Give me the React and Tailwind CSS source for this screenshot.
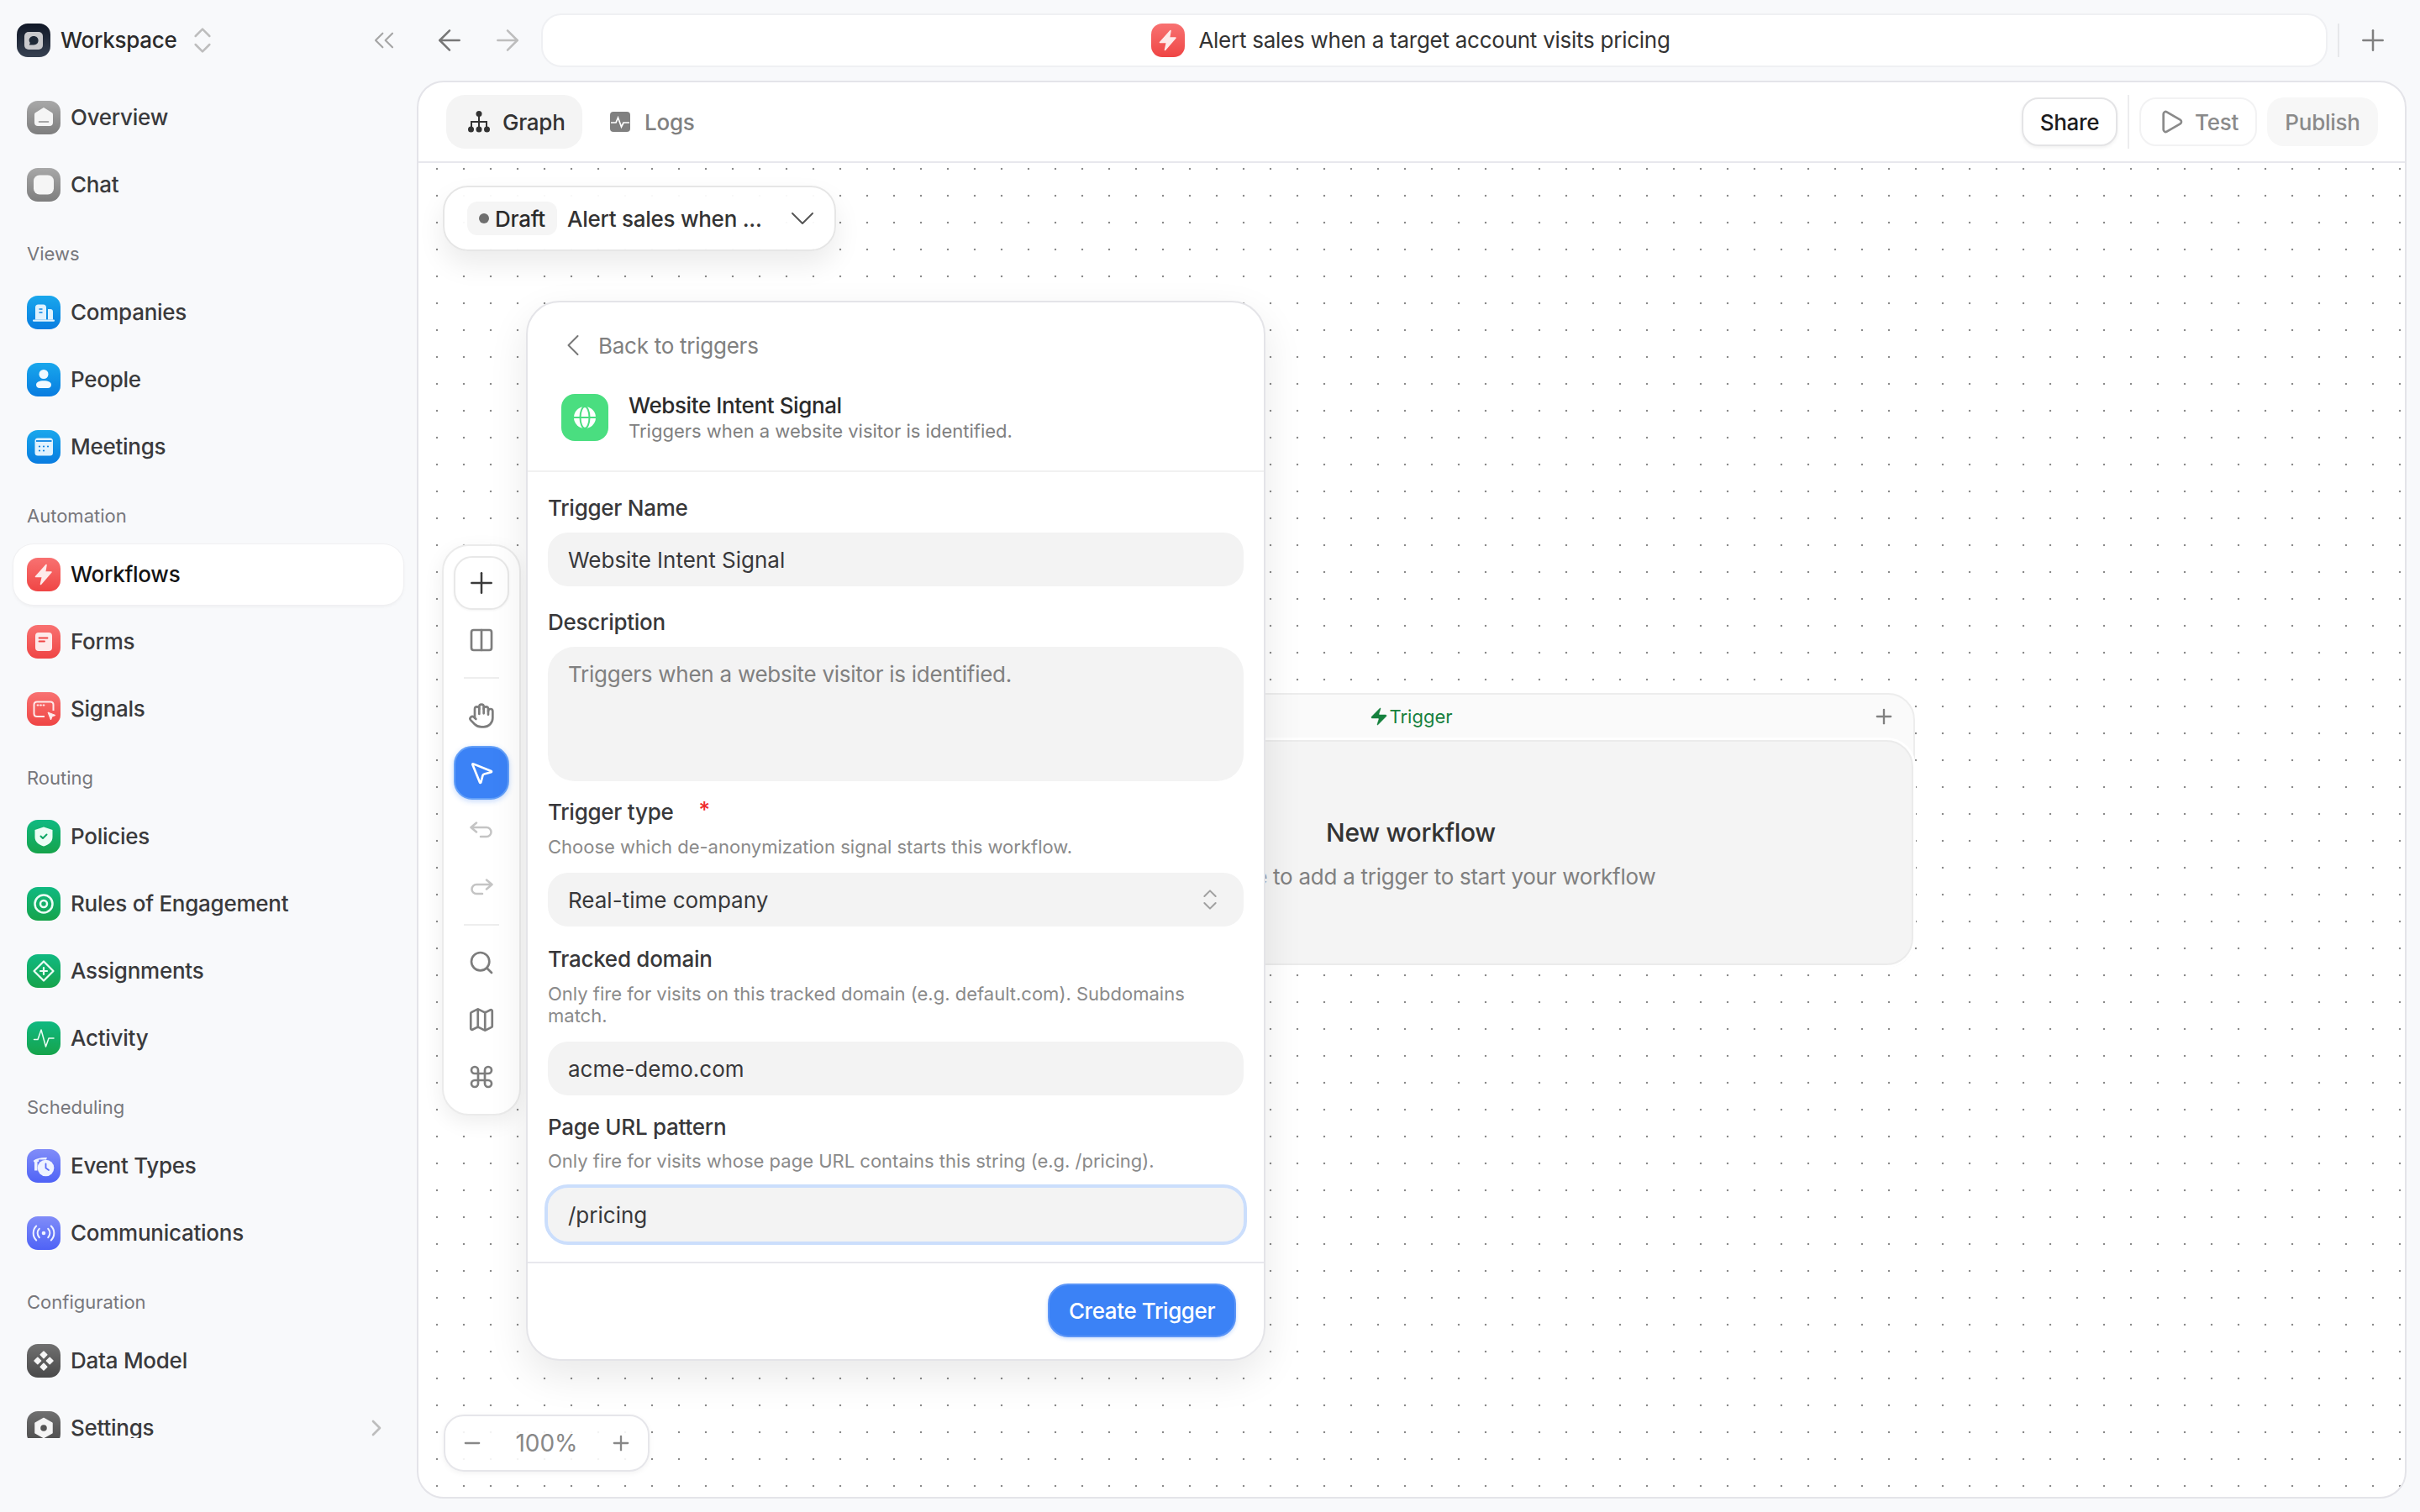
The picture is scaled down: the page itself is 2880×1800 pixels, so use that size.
import React from 'react';
import {
  ArrowLeft, ArrowRight, ChevronDown, ChevronLeft, ChevronRight, ChevronsLeft, ChevronsUpDown,
  Columns2, Command, Hand, Map as MapIcon, Minus, MousePointer2, Play, Plus, Search, Zap,
} from 'lucide-react';

const GRAY = 'from-[#a8a8a8] to-[#7e7e7e]';
const BLUE = 'from-[#1aa7ec] to-[#0a7ce0]';
const RED = 'from-[#f87171] to-[#ef4444]';
const GREEN = 'from-[#10b981] to-[#16a34a]';
const INDIGO = 'from-[#818cf8] to-[#4f62f6]';
const DARK = 'from-[#707070] to-[#4a4a4a]';

// All tile glyphs are drawn on a 40x40 box
const glyphs = {
  workspace: (
    <>
      <rect x="9" y="10" width="22" height="21" rx="5" fill="#c9c9cc" />
      <path d="M20 15c3.400 0 5.600 2.200 5.600 5.200 0 3-2.200 5.200-5.400 5.200h-5.400l1-2.400c-.8-.8-1.200-1.800-1.200-2.900 0-2.900 2.400-5.100 5.400-5.100z" fill="#1f2937" />
    </>
  ),
  home: (
    <>
      <path d="M20 8l10 6.200c.7.5 1 1.200 1 2V26c0 2.400-1.600 4-4 4H13c-2.400 0-4-1.600-4-4v-9.800c0-.8.3-1.500 1-2z" fill="#f5f5f5" />
      <path d="M14.500 25h11" stroke="#8c8c8c" strokeWidth="1.600" strokeLinecap="round" />
    </>
  ),
  chat: <rect x="8" y="8.500" width="24" height="23" rx="7" fill="#f5f5f5" />,
  building: (
    <>
      <path d="M10 28.500V14c0-2 1.200-3.500 3.500-3.500h6c2.200 0 3.500 1.500 3.500 3.500v14.500z" fill="#e0f2fe" />
      <path d="M25 28.500V16h3c1.800 0 3 1.200 3 3v9.500z" fill="#e0f2fe" />
      <rect x="7" y="28.500" width="26" height="2.200" rx="1" fill="#e0f2fe" />
      <path d="M14.500 16h4M14.500 20h4" stroke="#0a84e4" strokeWidth="1.600" />
    </>
  ),
  person: (
    <>
      <circle cx="20" cy="13.500" r="5.500" fill="#f0f9ff" />
      <path d="M11 26c0-3 3.500-4.800 9-4.800s9 1.800 9 4.800c0 2.500-1.800 4-4 4H15c-2.200 0-4-1.500-4-4z" fill="#f0f9ff" />
    </>
  ),
  calendar: (
    <>
      <rect x="9.500" y="9.500" width="21.500" height="21" rx="3.500" fill="#e0f2fe" />
      <path d="M11 13h18.500" stroke="#0a84e4" strokeWidth="1.800" />
      <g fill="#0a84e4">
        <circle cx="15" cy="19.500" r="1.100" /><circle cx="20" cy="19.500" r="1.100" /><circle cx="25" cy="19.500" r="1.100" />
        <circle cx="15" cy="24.500" r="1.100" /><circle cx="20" cy="24.500" r="1.100" />
      </g>
    </>
  ),
  bolt: <path d="M23 8.500L10.500 22.500h8L16.500 31.500 29 17h-7.500z" fill="#feeaea" stroke="#feeaea" strokeWidth="1.600" strokeLinejoin="round" />,
  form: (
    <>
      <rect x="10" y="9" width="20" height="22" rx="4" fill="#feeaea" />
      <path d="M14.500 15.500h10M14.500 19.500h6.500" stroke="#ef4444" strokeWidth="1.800" strokeLinecap="round" />
    </>
  ),
  signal: (
    <>
      <path d="M21 29H12c-2 0-3.500-1.400-3.500-3.500V15c0-2.100 1.500-3.500 3.500-3.500h16c2.100 0 3.500 1.400 3.500 3.500v7" fill="none" stroke="#feeaea" strokeWidth="2" />
      <path d="M12.500 15.500h1M16 15.500h1M19.500 15.500h1" stroke="#feeaea" strokeWidth="1.800" strokeLinecap="round" />
      <path d="M25 24l9 3.500-4 1.500-1.500 4z" fill="#feeaea" stroke="#feeaea" strokeWidth="1" strokeLinejoin="round" />
    </>
  ),
  shield: (
    <>
      <path d="M20 8.500l10.500 3.500v8.500c0 5.800-4.500 9-10.500 11-6-2-10.500-5.200-10.500-11V12z" fill="#ecfdf5" />
      <path d="M16.500 19.500l2.500 2.500 4.500-4.500" fill="none" stroke="#10a866" strokeWidth="2" strokeLinecap="round" strokeLinejoin="round" />
    </>
  ),
  target: (
    <>
      <circle cx="20" cy="20" r="10.500" fill="none" stroke="#ecfdf5" strokeWidth="2.500" />
      <circle cx="20" cy="20" r="4" fill="none" stroke="#ecfdf5" strokeWidth="2.500" />
    </>
  ),
  diamond: (
    <>
      <path d="M20 8.500L31.500 20 20 31.500 8.500 20z" fill="none" stroke="#ecfdf5" strokeWidth="2.200" strokeLinejoin="round" />
      <path d="M20 16v8M16 20h8" stroke="#ecfdf5" strokeWidth="2.200" strokeLinecap="round" />
    </>
  ),
  pulse: <path d="M8.500 21.500h4.500L17 10l5.500 20 3.500-10h6" fill="none" stroke="#ecfdf5" strokeWidth="1.500" strokeLinecap="round" strokeLinejoin="round" />,
  eventType: (
    <>
      <path d="M8 13.500c3-2 8-3.500 14-3.500h2l-1 2.500H14V15h-1.500v10.500H9V15.500L8 15z" fill="#eef2ff" />
      <circle cx="22.500" cy="22.500" r="9.800" fill="#eef2ff" />
      <path d="M22.500 17.500v5l3.500 2.500" fill="none" stroke="#5b6cf7" strokeWidth="1.800" strokeLinecap="round" strokeLinejoin="round" />
    </>
  ),
  radio: (
    <>
      <circle cx="20" cy="20" r="2.300" fill="#eef2ff" />
      <path d="M14.800 14.800a7.400 7.400 0 0 0 0 10.400M25.200 14.800a7.400 7.400 0 0 1 0 10.400M11.200 11.500a12 12 0 0 0 0 17M28.800 11.500a12 12 0 0 1 0 17" fill="none" stroke="#eef2ff" strokeWidth="2" strokeLinecap="round" />
    </>
  ),
  model: (
    <g fill="#f5f5f5" stroke="#f5f5f5" strokeWidth="1.500" strokeLinejoin="round">
      <path d="M20 9l3.800 3.800L20 16.600l-3.800-3.800z" />
      <path d="M12.800 16.200l3.800 3.800-3.800 3.800L9 20z" />
      <path d="M27.200 16.200L31 20l-3.800 3.800-3.800-3.800z" />
      <path d="M20 23.400l3.800 3.800L20 31l-3.800-3.800z" />
    </g>
  ),
  gear: (
    <>
      <path d="M20 8.500l10 5.700v11.600l-10 5.700-10-5.700V14.200z" fill="#f5f5f5" stroke="#f5f5f5" strokeWidth="1.500" strokeLinejoin="round" />
      <circle cx="20" cy="20" r="3.800" fill="#555" />
    </>
  ),
};

function Tile({ tone, glyph, className = 'w-10 h-10' }) {
  return (
    <span className={`${className} shrink-0 rounded-[13px] bg-linear-to-b ${tone} flex items-center justify-center`}>
      <svg viewBox="0 0 40 40" width="40" height="40" className="shrink-0">{glyphs[glyph]}</svg>
    </span>
  );
}

const sections = [
  { items: [['Overview', GRAY, 'home'], ['Chat', GRAY, 'chat']] },
  { label: 'Views', items: [['Companies', BLUE, 'building'], ['People', BLUE, 'person'], ['Meetings', BLUE, 'calendar']] },
  { label: 'Automation', items: [['Workflows', RED, 'bolt'], ['Forms', RED, 'form'], ['Signals', RED, 'signal']] },
  { label: 'Routing', items: [['Policies', GREEN, 'shield'], ['Rules of Engagement', GREEN, 'target'], ['Assignments', GREEN, 'diamond'], ['Activity', GREEN, 'pulse']] },
  { label: 'Scheduling', items: [['Event Types', INDIGO, 'eventType'], ['Communications', INDIGO, 'radio']] },
  { label: 'Configuration', items: [['Data Model', DARK, 'model'], ['Settings', DARK, 'gear']] },
];

function Sidebar() {
  return (
    <aside className="w-[496px] shrink-0 flex flex-col">
      <div className="h-[96px] shrink-0 flex items-center pl-5 pr-[10px]">
        <Tile tone="from-[#111827] to-[#374151]" glyph="workspace" />
        <span className="ml-3 -mt-[2px] text-[26px] tracking-[-0.01em] font-medium text-[#2b2b2b]">Workspace</span>
        <ChevronsUpDown size={40} strokeWidth={1.5} className="ml-[10px] text-[#bdbdbd] shrink-0" />
        <ChevronsLeft size={40} strokeWidth={1.3} className="ml-auto mr-[9px] text-[#a6a6a6] shrink-0" />
      </div>
      <nav className="mt-2 px-4 h-[1608px] overflow-hidden">
        {sections.map((section, i) => (
          <section key={i} className={section.label ? 'mt-6' : ''}>
            {section.label && (
              <div className="h-11 mb-3 pl-4 flex items-center text-[22px] text-[#77777c]">{section.label}</div>
            )}
            <div className="flex flex-col gap-2">
              {section.items.map(([name, tone, glyph]) => {
                const active = name === 'Workflows';
                return (
                  <div
                    key={name}
                    className={`h-[72px] rounded-[24px] pl-4 pr-4 flex items-center gap-3 text-[26px] tracking-[-0.01em] ${
                      active
                        ? 'bg-white font-medium text-[#141414] shadow-[0_0_0_1px_#f0f0f2,0_2px_4px_rgba(0,0,0,0.05)]'
                        : 'font-[450] text-[#3a3a3c]'
                    }`}
                  >
                    <Tile tone={tone} glyph={glyph} />
                    <span className="-mt-[2px]">{name}</span>
                    {name === 'Settings' && <ChevronRight size={32} className="ml-auto text-[#bdbdbd]" />}
                  </div>
                );
              })}
            </div>
          </section>
        ))}
      </nav>
    </aside>
  );
}

function TopBar() {
  return (
    <div className="h-[96px] shrink-0 flex items-center">
      <ArrowLeft size={40} strokeWidth={1.5} className="ml-[19px] text-[#777] shrink-0" />
      <ArrowRight size={40} strokeWidth={1.5} className="ml-[29px] text-[#bdbdbd] shrink-0" />
      <div className="ml-[20px] w-[2126px] h-16 bg-white rounded-[24px] border-2 border-[#eff0f3] flex items-center justify-center gap-[16px] pr-[56px]">
        <Tile tone={RED} glyph="bolt" />
        <span className="-mt-[2px] text-[26px] tracking-[-0.01em] text-[#333]">Alert sales when a target account visits pricing</span>
      </div>
      <div className="ml-[12px] w-[2px] h-10 bg-[#e6e7ea]" />
      <Plus size={40} strokeWidth={1.5} className="ml-[20px] text-[#808080] shrink-0" />
    </div>
  );
}

function PanelHeader() {
  return (
    <div className="h-[96px] shrink-0 border-b-2 border-[#e8e8ed] flex items-center pl-[33px] pr-[32px] text-[26px] tracking-[-0.01em] font-[450]">
      <div className="h-16 w-[162px] rounded-[22px] bg-[#f4f4f4] flex items-center pl-[25px] gap-[14px] text-[#333]">
        <svg viewBox="0 0 28 28" width="28" height="28" className="shrink-0">
          <path d="M14 5v9M5 22v-8h18v8M14 14v8" fill="none" stroke="#333" strokeWidth="2" />
          <g fill="#333">
            <circle cx="14" cy="4.500" r="3.500" /><circle cx="4.500" cy="23" r="3.500" /><circle cx="14" cy="23" r="3.500" /><circle cx="23.500" cy="23" r="3.500" />
          </g>
        </svg>
        Graph
      </div>
      <div className="h-16 ml-2 pl-[25px] flex items-center gap-[17px] text-[#808080]">
        <svg viewBox="0 0 24 24" width="24" height="24" className="shrink-0">
          <rect width="24" height="24" rx="4" fill="#808080" />
          <path d="M1 13h6l2.500-6 4 11 2.500-5h7" fill="none" stroke="#fff" strokeWidth="1.700" />
        </svg>
        Logs
      </div>
      <div className="ml-auto flex items-center">
        <div className="h-[58px] w-[114px] rounded-[20px] bg-white border-2 border-[#e4e4e6] shadow-[0_2px_4px_rgba(0,0,0,0.06)] flex items-center justify-center font-medium text-[#1c1c1e]">
          Share
        </div>
        <div className="mx-3 w-[2px] h-16 bg-[#ececee]" />
        <div className="h-[58px] w-[140px] rounded-[20px] bg-white border-2 border-[#f2f2f3] flex items-center pl-5 gap-3 text-[#8a8a8a]">
          <Play size={32} strokeWidth={2} className="shrink-0" />
          Test
        </div>
        <div className="ml-3 h-[58px] w-[132px] rounded-[20px] bg-[#f7f7f7] flex items-center justify-center text-[#8a8a8a]">
          Publish
        </div>
      </div>
    </div>
  );
}

function ToolButton({ children, className = 'text-[#7d7d7d]' }) {
  return <div className={`h-16 w-[66px] rounded-[22px] flex items-center justify-center ${className}`}>{children}</div>;
}

// Flatter than lucide's Undo2, the redo is the same arrow mirrored
function UndoArrow({ className = '' }) {
  return (
    <svg viewBox="0 0 28 20" width="28" height="20" fill="none" stroke="currentColor" strokeWidth="2.500" strokeLinecap="round" strokeLinejoin="round" className={className}>
      <path d="M8 1.500L1.500 7 8 12.500M1.500 7H20a5.500 5.500 0 0 1 0 11h-7" />
    </svg>
  );
}

function Toolbar() {
  return (
    <div className="absolute left-[28px] top-[454px] w-[94px] p-3 rounded-[32px] bg-white border-2 border-[#ebebeb] shadow-[0_8px_24px_rgba(0,0,0,0.07)] flex flex-col gap-1">
      <ToolButton className="border-2 border-[#e8e8e8] bg-white shadow-[0_1px_3px_rgba(0,0,0,0.05)] text-[#3a3a3a]">
        <Plus size={40} strokeWidth={1.5} />
      </ToolButton>
      <ToolButton><Columns2 size={32} strokeWidth={2} /></ToolButton>
      <div className="w-[42px] h-[2px] my-[8px] mx-auto bg-[#eeeeee]" />
      <ToolButton><Hand size={32} strokeWidth={2} /></ToolButton>
      <ToolButton className="bg-[#3b82f6] border-2 border-[#64a0f8] text-white shadow-[0_2px_6px_rgba(59,130,246,0.3)]">
        <MousePointer2 size={32} strokeWidth={2} />
      </ToolButton>
      <ToolButton className="text-[#c4c4c4]"><UndoArrow /></ToolButton>
      <ToolButton className="text-[#c4c4c4]"><UndoArrow className="-scale-x-100" /></ToolButton>
      <div className="w-[42px] h-[2px] my-[8px] mx-auto bg-[#eeeeee]" />
      <ToolButton><Search size={32} strokeWidth={2} /></ToolButton>
      <ToolButton><MapIcon size={34} strokeWidth={1.9} /></ToolButton>
      <ToolButton><Command size={32} strokeWidth={2} /></ToolButton>
    </div>
  );
}

function Label({ children, className = '' }) {
  return <div className={`h-10 flex items-center text-[26px] tracking-[-0.01em] font-[450] text-[#38383a] ${className}`}>{children}</div>;
}

function Help({ children, className = '' }) {
  return <div className={`text-[22px] leading-[26px] text-[#8a8a8a] ${className}`}>{children}</div>;
}

function Field({ children, className = '' }) {
  return (
    <div className={`h-16 rounded-[24px] bg-[#f3f3f3] px-6 flex items-center text-[26px] text-[#38383a] ${className}`}>
      {children}
    </div>
  );
}

function TriggerDialog() {
  return (
    <div className="absolute left-[128px] top-[164px] w-[880px] h-[1262px] rounded-[40px] bg-white border-2 border-[#e4e4e8] shadow-[0_18px_48px_rgba(0,0,0,0.09)] flex flex-col">
      <div className="h-[202px] shrink-0 border-b-2 border-[#f1f1f1] pt-[31px]">
        <div className="h-10 pl-[38px] flex items-center gap-[14px] text-[26px] tracking-[-0.01em] text-[#808080]">
          <ChevronLeft size={44} strokeWidth={1.1} className="shrink-0 -mx-[6px] text-[#777]" />
          Back to triggers
        </div>
        <div className="mt-[37px] pl-10 flex items-center gap-6">
          <span className="w-14 h-14 shrink-0 rounded-[16px] bg-[#4ade80] flex items-center justify-center">
            <svg viewBox="0 0 28 28" width="28" height="28">
              <circle cx="14" cy="14" r="13" fill="#fff" />
              <ellipse cx="14" cy="14" rx="5.500" ry="13" fill="none" stroke="#4ade80" strokeWidth="2" />
              <path d="M1 14h26" stroke="#4ade80" strokeWidth="2" />
            </svg>
          </span>
          <div>
            <div className="text-[26px] tracking-[-0.015em] leading-[30px] font-medium text-[#2b2b2b]">Website Intent Signal</div>
            <Help className="mt-[2px] text-[#808080]">Triggers when a website visitor is identified.</Help>
          </div>
        </div>
      </div>
      <div className="px-6 flex-1">
        <Label className="mt-[22px]">Trigger Name</Label>
        <Field className="mt-[10px]">Website Intent Signal</Field>
        <Label className="mt-[22px]">Description</Label>
        <div className="mt-[10px] h-[160px] rounded-[32px] bg-[#f3f3f3] px-6 pt-[17px] text-[26px] tracking-[-0.01em] leading-[32px] text-[#808080]">
          Triggers when a website visitor is identified.
        </div>
        <Label className="mt-[16px]">
          Trigger type
          <span className="ml-[30px] -mt-[6px] text-[#ef2b2b]">*</span>
        </Label>
        <Help className="mt-[9px]">Choose which de-anonymization signal starts this workflow.</Help>
        <Field className="mt-[18px] justify-between pr-[24px]">
          Real-time company
          <ChevronsUpDown size={32} strokeWidth={1.5} className="text-[#a0a0a0]" />
        </Field>
        <Label className="mt-[18px]">Tracked domain</Label>
        <Help className="mt-[9px]">Only fire for visits on this tracked domain (e.g. default.com). Subdomains match.</Help>
        <Field className="mt-[18px]">acme-demo.com</Field>
        <Label className="mt-[17px]">Page URL pattern</Label>
        <Help className="mt-[8px]">Only fire for visits whose page URL contains this string (e.g. /pricing).</Help>
        <Field className="mt-[19px] outline-4 outline-[#cbdefc]">/pricing</Field>
      </div>
      <div className="h-[116px] shrink-0 border-t-2 border-[#e8e8ed] pt-6 pr-[33px] flex justify-end">
        <div className="h-16 w-[224px] rounded-[24px] bg-[#3b82f6] border-2 border-[#5b95f7] shadow-[0_2px_4px_rgba(59,130,246,0.25)] flex items-center justify-center text-[26px] tracking-[-0.015em] font-[450] text-white">
          Create Trigger
        </div>
      </div>
    </div>
  );
}

function WorkflowNode() {
  return (
    <div className="absolute left-[581px] top-[631px] w-[1200px] rounded-[32px] bg-[#fafafa] border-2 border-[#ededed]">
      <div className="h-[54px] -mt-[1px] relative flex items-center justify-center text-[22px] text-[#15803d]">
        <Zap size={24} fill="currentColor" strokeWidth={0.5} />
        Trigger
        <Plus size={28} strokeWidth={2} className="absolute right-[21px] text-[#808080]" />
      </div>
      <div className="h-[268px] mt-[1px] rounded-[32px] bg-[#f4f4f4] border-2 border-[#ebebeb] shadow-[0_0_0_3px_#fff] flex flex-col items-center pt-[86px]">
        <div className="text-[30px] tracking-[-0.01em] leading-[44px] font-medium text-[#333]">New workflow</div>
        <div className="mt-[11px] text-[26px] tracking-[-0.01em] leading-[40px] text-[#808080]">Click here to add a trigger to start your workflow</div>
      </div>
    </div>
  );
}

function DraftPicker() {
  return (
    <div className="absolute left-[29px] top-[27px] w-[468px] h-[78px] rounded-[30px] bg-white/95 border-2 border-[#e6e6e6] shadow-[0_16px_32px_rgba(0,0,0,0.08)] flex items-center pl-[27px] pr-[21px] text-[26px] tracking-[-0.01em] font-[450] whitespace-nowrap">
      <div className="h-10 w-[107px] rounded-[12px] bg-[#f5f5f5] flex items-center pl-[14px] gap-[7px] text-[#2b2b2b]">
        <span className="w-3 h-3 rounded-full bg-[#6f6f6f] shrink-0" />
        Draft
      </div>
      <span className="ml-3 text-[#333]">Alert sales when ...</span>
      <ChevronDown size={48} strokeWidth={1} className="ml-auto -mr-[7px] text-[#555] shrink-0" />
    </div>
  );
}

function ZoomControl() {
  return (
    <div className="absolute left-[30px] bottom-[30px] w-[245px] h-[68px] rounded-[24px] bg-white/90 border-2 border-[#e6e6ea] shadow-[0_2px_6px_rgba(0,0,0,0.05)] flex items-center justify-between px-[18px] text-[28px] text-[#888]">
      <Minus size={28} strokeWidth={2} />
      100%
      <Plus size={28} strokeWidth={2} />
    </div>
  );
}

export default function App() {
  return (
    <div className="flex h-screen w-full overflow-hidden bg-[#f8f9fb] antialiased [font-family:Inter,sans-serif]">
      <Sidebar />
      <main className="flex-1 min-w-0 flex flex-col pr-4 pb-4">
        <TopBar />
        <div className="flex-1 min-h-0 rounded-[32px] bg-white border-2 border-[#e4e4e9] overflow-hidden flex flex-col">
          <PanelHeader />
          <div className="relative flex-1 bg-[radial-gradient(circle,#8a8a8a_1.3px,transparent_1.6px)] bg-[length:32px_32px] bg-[position:6px_-9px]">
            <WorkflowNode />
            <DraftPicker />
            <Toolbar />
            <TriggerDialog />
            <ZoomControl />
          </div>
        </div>
      </main>
    </div>
  );
}
